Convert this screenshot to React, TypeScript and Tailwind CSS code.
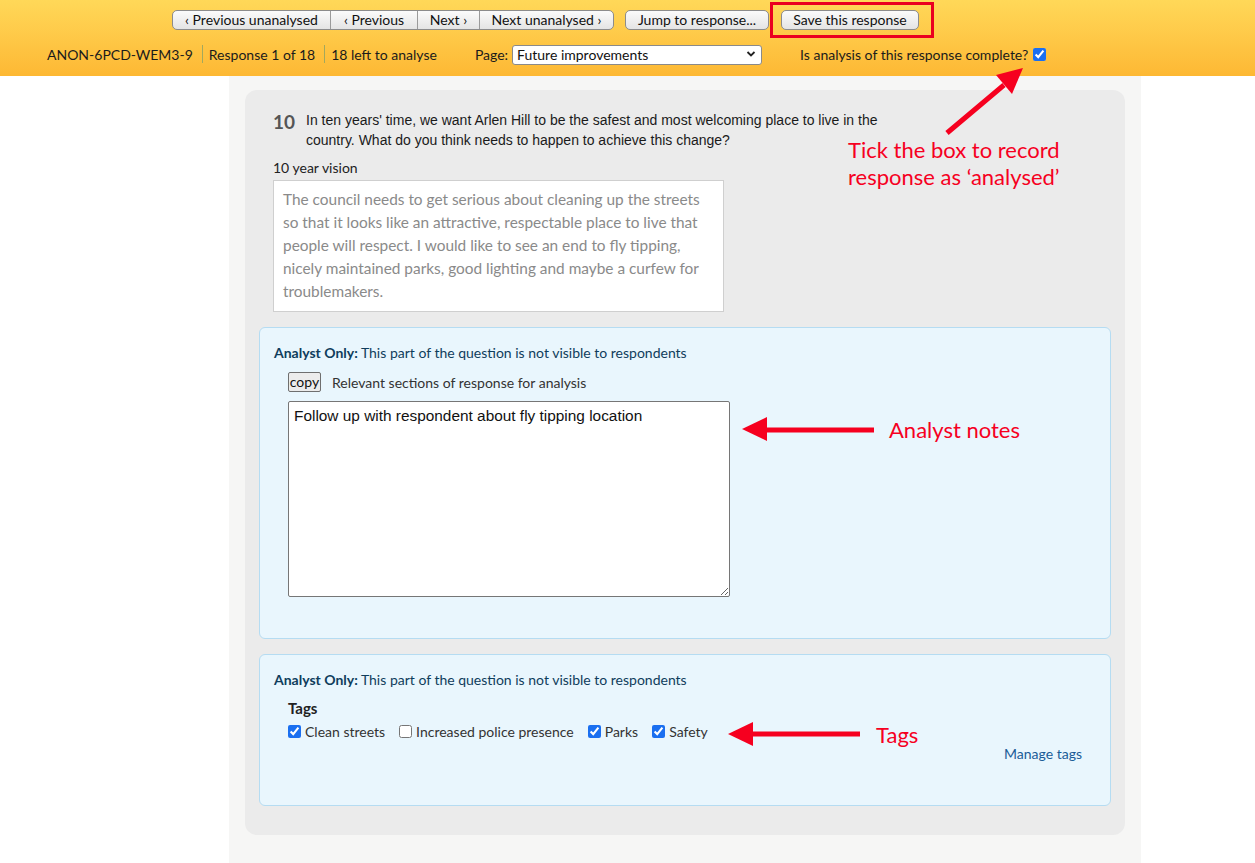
import React from 'react'

const navBtn =
  'flex h-full items-center justify-center text-[14px] leading-none text-[#111] border-l border-[#9a9a9a] first:border-l-0'

function HeaderButton({ children, className }: { children: React.ReactNode; className?: string }) {
  return (
    <button
      className={`flex h-[20px] items-center justify-center rounded-[5px] border border-[#8c8c8c] bg-linear-to-b from-[#fbfbfb] to-[#e4e4e4] text-[14px] leading-none text-[#111] ${className ?? ''}`}
    >
      {children}
    </button>
  )
}

function Sep() {
  return <span className="ml-[9px] mr-[6px] h-[18px] w-px bg-[#a3a85c]" />
}

function TagBox({ label, checked }: { label: string; checked: boolean }) {
  return (
    <label className="flex items-center gap-[4px] text-[14px] text-[#333]">
      <input type="checkbox" defaultChecked={checked} className="m-0 h-[13px] w-[13px] accent-[#1a6ff0]" />
      {label}
    </label>
  )
}

function AnalystOnly() {
  return (
    <div className="h-[20px] leading-[20px] text-[14px] text-[#0f3d5c]">
      <span className="font-bold">Analyst Only:</span> This part of the question is not visible to respondents
    </div>
  )
}

export default function App() {
  return (
    <div className="relative flex min-h-screen flex-col bg-white font-['Lato',sans-serif] text-[14px] text-[#1b1b1b]">
      <header className="h-[76px] shrink-0 bg-linear-to-b from-[#ffd858] to-[#fdb833]">
        <div className="flex items-center pl-[172px] pt-[10px]">
          <div className="flex h-[20px] overflow-hidden rounded-[5px] border border-[#8c8c8c] bg-linear-to-b from-[#fbfbfb] to-[#e4e4e4]">
            <button className={`${navBtn} w-[157px]`}>‹ Previous unanalysed</button>
            <button className={`${navBtn} w-[87px]`}>‹ Previous</button>
            <button className={`${navBtn} w-[62px]`}>Next ›</button>
            <button className={`${navBtn} w-[134px]`}>Next unanalysed ›</button>
          </div>
          <HeaderButton className="ml-[11px] w-[144px]">Jump to response...</HeaderButton>
          <div className="relative ml-[12px]">
            <HeaderButton className="w-[138px]">Save this response</HeaderButton>
            <span className="pointer-events-none absolute -top-[8px] -bottom-[8px] -left-[11px] -right-[15px] border-[3px] border-[#ea0020]" />
          </div>
        </div>
        <div className="mt-[14px] flex h-[20px] items-center pl-[47px] text-[14px]">
          <span>ANON-6PCD-WEM3-9</span>
          <Sep />
          <span>Response 1 of 18</span>
          <Sep />
          <span>18 left to analyse</span>
          <span className="ml-[38px]">Page:</span>
          <div className="relative ml-[4px]">
            <select className="h-[20px] w-[250px] appearance-none rounded-[3px] border border-[#8a8a8a] bg-white pl-[4px] text-[14px] leading-none text-[#111]">
              <option>Future improvements</option>
            </select>
            <svg className="pointer-events-none absolute right-[6px] top-[6px]" width="10" height="8" viewBox="0 0 10 8">
              <path d="M1.5 2l3.5 3.5L8.5 2" fill="none" stroke="#222" strokeWidth="1.8" />
            </svg>
          </div>
          <span className="ml-[38px]">Is analysis of this response complete?</span>
          <input type="checkbox" defaultChecked className="ml-[5px] h-[13px] w-[13px] accent-[#1a6ff0]" />
        </div>
      </header>

      <div className="ml-[229px] w-[912px] flex-1 bg-[#f6f6f5] px-[16px] pt-[14px] pb-[28px]">
        <div className="rounded-[12px] bg-[#ebebeb] px-[14px] pt-[20px] pb-[29px]">
          <div className="px-[14px]">
            <div className="flex">
              <span className="w-[33px] shrink-0 pt-[1px] text-[19px] font-bold leading-[22px] text-[#555]">10</span>
              <p className="w-[590px] font-['Liberation_Sans',Arial,sans-serif] text-[14px] leading-[20px] text-[#1a1a1a]">
                In ten years' time, we want Arlen Hill to be the safest and most welcoming place to live in the country. What do you think needs to happen to achieve this change?
              </p>
            </div>
            <div className="mt-[8px] h-[20px] leading-[20px] text-[14px] text-[#222]">10 year vision</div>
            <div className="mt-[2px] h-[132px] w-[451px] border border-[#cfcfcf] bg-white pl-[9px] pr-[16px] pt-[7px] text-[15.4px] leading-[23px] text-[#8a8a8a]">
              The council needs to get serious about cleaning up the streets so that it looks like an attractive, respectable place to live that people will respect. I would like to see an end to fly tipping, nicely maintained parks, good lighting and maybe a curfew for troublemakers.
            </div>
          </div>

          <div className="mt-[15px] rounded-[6px] border border-[#b5dcf2] bg-[#e9f6fd] px-[14px] pt-[15px] pb-[41px]">
            <AnalystOnly />
            <div className="px-[14px]">
              <div className="mt-[9px] flex h-[20px] items-center">
                <button className="flex h-[20px] w-[33px] items-center justify-center rounded-[2px] border border-[#6f6f6f] bg-[#ececec] text-[14px] leading-none text-[#111]">
                  copy
                </button>
                <span className="ml-[11px] text-[14px] text-[#333]">Relevant sections of response for analysis</span>
              </div>
              <textarea
                defaultValue="Follow up with respondent about fly tipping location"
                className="mt-[9px] block h-[196px] w-[442px] rounded-[2px] border border-[#767676] bg-white px-[5px] py-[5px] font-['Liberation_Sans',Arial,sans-serif] text-[15.4px] leading-[18px] text-[#111]"
              />
            </div>
          </div>

          <div className="mt-[15px] rounded-[6px] border border-[#b5dcf2] bg-[#e9f6fd] px-[14px] pt-[15px] pb-[41px]">
            <AnalystOnly />
            <div className="px-[14px]">
              <div className="mt-[8px] h-[20px] text-[15px] font-bold leading-[20px] text-[#222]">Tags</div>
              <div className="mt-[3px] flex h-[20px] items-center gap-[14px]">
                <TagBox label="Clean streets" checked />
                <TagBox label="Increased police presence" checked={false} />
                <TagBox label="Parks" checked />
                <TagBox label="Safety" checked />
              </div>
              <div className="mt-[3px] flex h-[20px] justify-end">
                <a href="#" className="text-[14px] leading-[20px] text-[#1a5c97]">Manage tags</a>
              </div>
            </div>
          </div>
        </div>
      </div>

      {/* annotations */}
      <svg className="pointer-events-none absolute left-0 top-0" width="1255" height="863">
        <g fill="#f6001f" stroke="#f6001f">
          <line x1="947" y1="133" x2="1004" y2="85" strokeWidth="5" />
          <polygon points="1023,68 1012,94 996,75" stroke="none" />
          <line x1="764" y1="430" x2="874" y2="430" strokeWidth="5" />
          <polygon points="742,429 767,417 767,441" stroke="none" />
          <line x1="750" y1="734" x2="860" y2="734" strokeWidth="5" />
          <polygon points="728,734 753,722 753,746" stroke="none" />
        </g>
      </svg>
      <div className="pointer-events-none absolute left-[848px] top-[136px] text-[22px] leading-[27px] text-[#f6001f]">
        Tick the box to record
        <br />
        response as ‘analysed’
      </div>
      <div className="pointer-events-none absolute left-[889px] top-[416px] text-[22px] leading-[27px] text-[#f6001f]">Analyst notes</div>
      <div className="pointer-events-none absolute left-[876px] top-[721px] text-[22px] leading-[27px] text-[#f6001f]">Tags</div>
    </div>
  )
}
